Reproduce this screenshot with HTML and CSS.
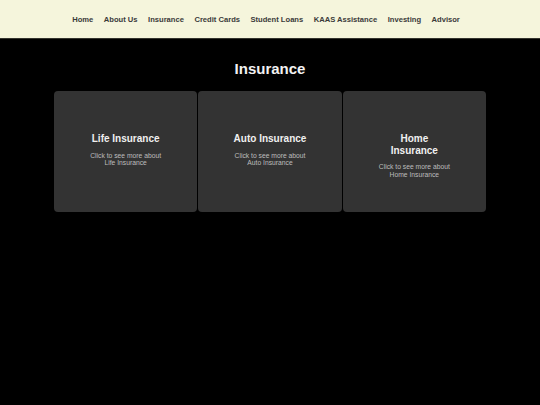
FILE: index.html
```html
<!DOCTYPE html>
<html lang="en">
<head>
<meta charset="utf-8">
<title>Insurance</title>
<link rel="stylesheet" href="styles.css">
</head>
<body>
<header class="site-header">
  <nav class="nav">
    <a href="#" class="nav-link">Home</a>
    <a href="#" class="nav-link">About Us</a>
    <a href="#" class="nav-link">Insurance</a>
    <a href="#" class="nav-link">Credit Cards</a>
    <a href="#" class="nav-link">Student Loans</a>
    <a href="#" class="nav-link">KAAS Assistance</a>
    <a href="#" class="nav-link">Investing</a>
    <a href="#" class="nav-link">Advisor</a>
  </nav>
</header>
<main class="main">
  <h1 class="page-title">Insurance</h1>
  <section class="cards">
    <a href="#" class="card">
      <h2 class="card-title">Life Insurance</h2>
      <p class="card-text">Click to see more about Life Insurance</p>
    </a>
    <a href="#" class="card">
      <h2 class="card-title">Auto Insurance</h2>
      <p class="card-text">Click to see more about Auto Insurance</p>
    </a>
    <a href="#" class="card">
      <h2 class="card-title">Home Insurance</h2>
      <p class="card-text">Click to see more about Home Insurance</p>
    </a>
  </section>
</main>
</body>
</html>
```

FILE: styles.css
```css
* {
  box-sizing: border-box;
}

html, body {
  margin: 0;
  padding: 0;
}

body {
  background: #000;
  font-family: "Liberation Sans", Arial, Helvetica, sans-serif;
  min-height: 405px;
}

.site-header {
  height: 39px;
  background: #f5f5dc;
  border-bottom: 1px solid #35352e;
  display: flex;
  align-items: center;
  justify-content: center;
}

.nav {
  display: flex;
  gap: 10.5px;
  align-items: center;
  padding-right: 8px;
}

.nav-link {
  font-size: 7.6px;
  font-weight: bold;
  color: #3a3a3a;
  text-decoration: none;
}

.main {
  padding-top: 21px;
}

.page-title {
  margin: 0 0 14px;
  text-align: center;
  color: #f2f2f2;
  font-size: 15px;
  font-weight: bold;
  line-height: normal;
}

.cards {
  width: 432px;
  margin: 0 auto;
  display: grid;
  grid-template-columns: repeat(3, 1fr);
  gap: 1px;
}

.card {
  height: 121px;
  background: #333;
  border-radius: 4px;
  padding: 42px 34px 0;
  text-align: center;
  text-decoration: none;
  display: flex;
  flex-direction: column;
  align-items: center;
}

.card-title {
  margin: 0 0 7px;
  font-size: 10px;
  font-weight: bold;
  color: #f0f0f0;
  line-height: 11.7px;
}

.card-text {
  margin: 0;
  font-size: 6.75px;
  color: #bdbdbd;
  line-height: 7.7px;
}
```
